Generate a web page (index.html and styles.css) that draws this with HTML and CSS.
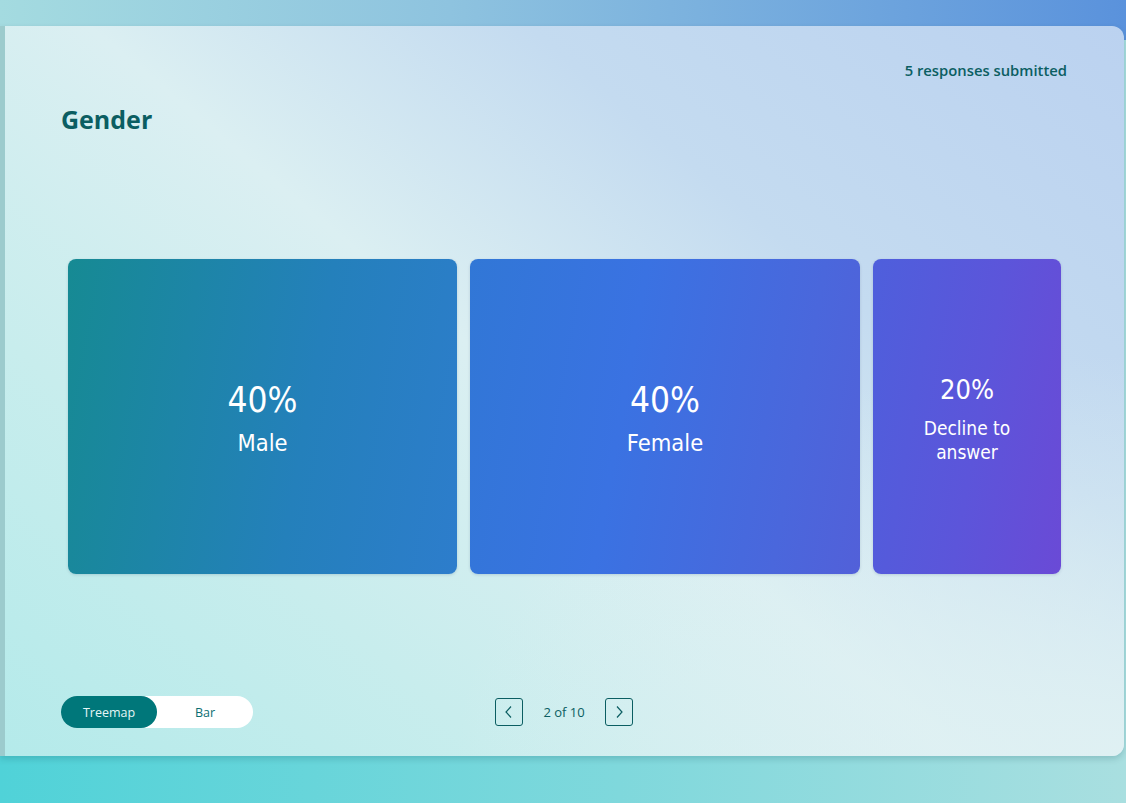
FILE: index.html
```html
<!DOCTYPE html>
<html lang="en">
<head>
    <meta charset="UTF-8">
    <meta name="viewport" content="width=device-width, initial-scale=1.0">
    <title>Gender - Results</title>
    <link rel="stylesheet" href="styles.css">
</head>
<body>
    <div class="results-card">
        <div class="results-top">
            <span class="response-count">5 responses submitted</span>
        </div>
        <h1 class="question-title">Gender</h1>

        <div class="treemap">
            <div class="tile tile-male">
                <span class="tile-pct">40%</span>
                <span class="tile-label">Male</span>
            </div>
            <div class="tile tile-female">
                <span class="tile-pct">40%</span>
                <span class="tile-label">Female</span>
            </div>
            <div class="tile tile-decline">
                <span class="tile-pct">20%</span>
                <span class="tile-label">Decline to<br>answer</span>
            </div>
        </div>

        <div class="results-footer">
            <div class="view-toggle">
                <button class="toggle-btn active">Treemap</button>
                <button class="toggle-btn">Bar</button>
            </div>
            <div class="pager">
                <button class="pager-btn" aria-label="Previous">
                    <svg width="12" height="14" viewBox="0 0 12 14"><path d="M8 1.5 L3 7 L8 12.5" fill="none" stroke="#0b5e62" stroke-width="1.2"/></svg>
                </button>
                <span class="pager-text">2 of 10</span>
                <button class="pager-btn" aria-label="Next">
                    <svg width="12" height="14" viewBox="0 0 12 14"><path d="M4 1.5 L9 7 L4 12.5" fill="none" stroke="#0b5e62" stroke-width="1.2"/></svg>
                </button>
            </div>
            <div></div>
        </div>
    </div>
</body>
</html>
```

FILE: styles.css
```css
html, body { margin: 0; height: 100%; }
body { font-family: "Open Sans", "Noto Sans", sans-serif; background: linear-gradient(to right, #a4dbe0, #8ec3df 40%, #5a92dc) top / 100% 40px no-repeat, linear-gradient(to right, #50d2d8, #7fd8dc 55%, #a9dfe0) bottom / 100% calc(100% - 40px) no-repeat; padding-top: 26px; box-sizing: border-box; overflow: hidden; }
.results-card { width: 1124px; height: 730px; box-sizing: border-box; border-left: 5px solid #9ccbcd; border-radius: 0 12px 12px 0; background: radial-gradient(ellipse 60% 55% at 100% 100%, rgba(224, 241, 243, 0.95), rgba(224, 241, 243, 0) 100%), linear-gradient(40deg, #b4eaea 0%, #c8eded 25%, #dbeff2 48%, #c4dbf0 70%, #bbd2f0 100%); box-shadow: 0 3px 6px rgba(0, 60, 70, 0.18); padding: 34px 57px 28px 56px; display: flex; flex-direction: column; }
.results-top { display: flex; justify-content: flex-end; height: 20px; }
.response-count { font-size: 14.8px; font-weight: 600; color: #0b5e62; line-height: 20px; }
.question-title { margin: 22px 0 0; font-size: 25px; font-weight: 700; color: #0b5e62; line-height: 34px; }
.treemap { display: grid; grid-template-columns: 389px 390px 188px; gap: 13px; height: 315px; margin: 123px 7px 0; }
.tile { border-radius: 8px; display: flex; flex-direction: column; align-items: center; justify-content: center; color: white; text-align: center; font-family: "DejaVu Sans Condensed", "DejaVu Sans", sans-serif; box-shadow: 0 1px 3px rgba(0, 40, 80, 0.15); padding-top: 2px; }
.tile-pct { font-size: 35px; line-height: 42px; }
.tile-label { font-size: 23.5px; line-height: 26px; margin-top: 9px; }
.tile-decline { padding-top: 4px; }
.tile-decline .tile-pct { font-size: 27px; line-height: 34px; }
.tile-decline .tile-label { font-size: 19px; line-height: 24px; margin-top: 9px; }
.tile-male { background: linear-gradient(100deg, #168a93 0%, #2480bb 60%, #2d7dcc 100%); }
.tile-female { background: linear-gradient(100deg, #3177d6 0%, #3a72e2 40%, #4a67dc 80%, #5260d9 100%); }
.tile-decline { background: linear-gradient(100deg, #4e5fdc 0%, #5c55da 55%, #6a4ad6 100%); }
.results-footer { margin-top: auto; display: grid; grid-template-columns: 1fr auto 1fr; align-items: center; }
.view-toggle { display: flex; width: 192px; height: 32px; background: white; border-radius: 16px; }
.toggle-btn { flex: 1; border: none; background: none; border-radius: 16px; font-family: "Open Sans", "Noto Sans", sans-serif; font-size: 12.5px; color: #0b6e72; cursor: pointer; padding: 0; }
.toggle-btn.active { background: #00777a; color: #e6f6f6; flex: 0 0 96px; }
.pager { display: flex; align-items: center; gap: 20px; }
.pager-btn { width: 28px; height: 28px; border: 1px solid #0b5e62; border-radius: 3px; background: none; padding: 0; display: flex; align-items: center; justify-content: center; cursor: pointer; }
.pager-text { font-size: 13px; color: #0b5e62; }
```
